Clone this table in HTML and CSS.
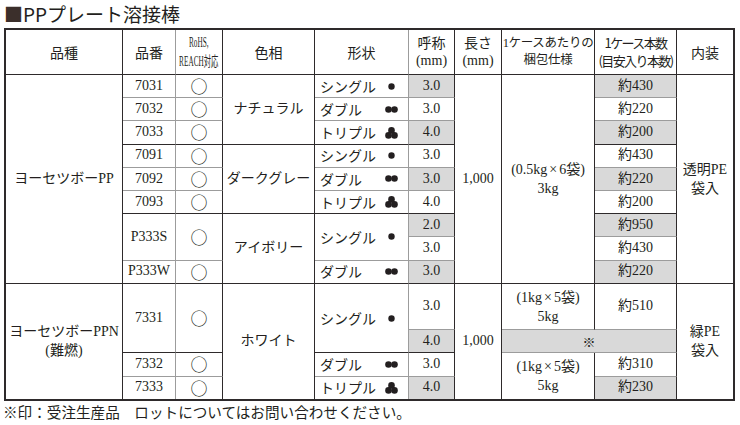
FILE: index.html
```html
<!DOCTYPE html>
<html lang="ja">
<head>
<meta charset="utf-8">
<title>PPプレート溶接棒</title>
<link rel="stylesheet" href="styles.css">
</head>
<body>
<h1 class="title"><span class="sq">■</span>PPプレート溶接棒</h1>
<div class="tbl">
  <div class="grid">
    <!-- header -->
    <div class="c h B">品種</div>
    <div class="c h B gr">品番</div>
    <div class="c h B"><span class="rohs">RoHS,<br>REACH対応</span></div>
    <div class="c h B">色相</div>
    <div class="c h B gr">形状</div>
    <div class="c h B"><span class="two">呼称<br>(mm)</span></div>
    <div class="c h B"><span class="two">長さ<br>(mm)</span></div>
    <div class="c h B"><span class="two pack">1ケースあたりの<br>梱包仕様</span></div>
    <div class="c h B"><span class="cond">1ケース本数<br>(目安入り本数)</span></div>
    <div class="c h B">内装</div>

    <!-- r1 -->
    <div class="c s9 B">ヨーセツボーPP</div>
    <div class="c gr">7031</div>
    <div class="c o">○</div>
    <div class="c s3 B">ナチュラル</div>
    <div class="c gr sh"><span>シングル</span><i class="ic"><svg width="7" height="7" viewBox="0 0 7 7"><circle cx="3.5" cy="3.5" r="3.2"/></svg></i></div>
    <div class="c f">3.0</div>
    <div class="c s9 B">1,000</div>
    <div class="c s9 B"><span class="two">(0.5kg<span class="x">×</span>6袋)<br>3kg</span></div>
    <div class="c f">約430</div>
    <div class="c s9 B"><span class="two">透明PE<br>袋入</span></div>
    <!-- r2 -->
    <div class="c gr">7032</div>
    <div class="c o">○</div>
    <div class="c gr sh"><span>ダブル</span><i class="ic"><svg width="13" height="7" viewBox="0 0 13 7"><circle cx="3.5" cy="3.5" r="3.3"/><circle cx="9.5" cy="3.5" r="3.3"/></svg></i></div>
    <div class="c">3.0</div>
    <div class="c">約220</div>
    <!-- r3 -->
    <div class="c gr B">7033</div>
    <div class="c o B">○</div>
    <div class="c gr sh B"><span>トリプル</span><i class="ic"><svg width="13" height="12" viewBox="0 0 13 12"><circle cx="6.5" cy="3.4" r="3.3"/><circle cx="3.5" cy="8.4" r="3.3"/><circle cx="9.5" cy="8.4" r="3.3"/></svg></i></div>
    <div class="c f B">4.0</div>
    <div class="c f B">約200</div>
    <!-- r4 -->
    <div class="c gr">7091</div>
    <div class="c o">○</div>
    <div class="c s3 B">ダークグレー</div>
    <div class="c gr sh"><span>シングル</span><i class="ic"><svg width="7" height="7" viewBox="0 0 7 7"><circle cx="3.5" cy="3.5" r="3.2"/></svg></i></div>
    <div class="c">3.0</div>
    <div class="c">約430</div>
    <!-- r5 -->
    <div class="c gr">7092</div>
    <div class="c o">○</div>
    <div class="c gr sh"><span>ダブル</span><i class="ic"><svg width="13" height="7" viewBox="0 0 13 7"><circle cx="3.5" cy="3.5" r="3.3"/><circle cx="9.5" cy="3.5" r="3.3"/></svg></i></div>
    <div class="c f">3.0</div>
    <div class="c f">約220</div>
    <!-- r6 -->
    <div class="c gr B">7093</div>
    <div class="c o B">○</div>
    <div class="c gr sh B"><span>トリプル</span><i class="ic"><svg width="13" height="12" viewBox="0 0 13 12"><circle cx="6.5" cy="3.4" r="3.3"/><circle cx="3.5" cy="8.4" r="3.3"/><circle cx="9.5" cy="8.4" r="3.3"/></svg></i></div>
    <div class="c B">4.0</div>
    <div class="c B">約200</div>
    <!-- r7 -->
    <div class="c gr s2">P333S</div>
    <div class="c o s2">○</div>
    <div class="c s3 B">アイボリー</div>
    <div class="c gr sh s2"><span>シングル</span><i class="ic"><svg width="7" height="7" viewBox="0 0 7 7"><circle cx="3.5" cy="3.5" r="3.2"/></svg></i></div>
    <div class="c f">2.0</div>
    <div class="c f">約950</div>
    <!-- r8 -->
    <div class="c">3.0</div>
    <div class="c">約430</div>
    <!-- r9 -->
    <div class="c gr B">P333W</div>
    <div class="c o B">○</div>
    <div class="c gr sh B"><span>ダブル</span><i class="ic"><svg width="13" height="7" viewBox="0 0 13 7"><circle cx="3.5" cy="3.5" r="3.3"/><circle cx="9.5" cy="3.5" r="3.3"/></svg></i></div>
    <div class="c f B">3.0</div>
    <div class="c f B">約220</div>
    <!-- r10 -->
    <div class="c s5"><span class="two">ヨーセツボーPPN<br>(難燃)</span></div>
    <div class="c gr s3 B">7331</div>
    <div class="c o s3 B">○</div>
    <div class="c s5">ホワイト</div>
    <div class="c gr sh s3 B"><span>シングル</span><i class="ic"><svg width="7" height="7" viewBox="0 0 7 7"><circle cx="3.5" cy="3.5" r="3.2"/></svg></i></div>
    <div class="c s2">3.0</div>
    <div class="c s5">1,000</div>
    <div class="c s2"><span class="two">(1kg<span class="x">×</span>5袋)<br>5kg</span></div>
    <div class="c s2">約510</div>
    <div class="c s5"><span class="two">緑PE<br>袋入</span></div>
    <!-- r12 -->
    <div class="c f B">4.0</div>
    <div class="c f w2 kome">※</div>
    <!-- r13 -->
    <div class="c gr">7332</div>
    <div class="c o">○</div>
    <div class="c gr sh"><span>ダブル</span><i class="ic"><svg width="13" height="7" viewBox="0 0 13 7"><circle cx="3.5" cy="3.5" r="3.3"/><circle cx="9.5" cy="3.5" r="3.3"/></svg></i></div>
    <div class="c">3.0</div>
    <div class="c s2"><span class="two">(1kg<span class="x">×</span>5袋)<br>5kg</span></div>
    <div class="c">約310</div>
    <!-- r14 -->
    <div class="c gr">7333</div>
    <div class="c o">○</div>
    <div class="c gr sh"><span>トリプル</span><i class="ic"><svg width="13" height="12" viewBox="0 0 13 12"><circle cx="6.5" cy="3.4" r="3.3"/><circle cx="3.5" cy="8.4" r="3.3"/><circle cx="9.5" cy="8.4" r="3.3"/></svg></i></div>
    <div class="c f">4.0</div>
    <div class="c f">約230</div>
  </div>
</div>
<p class="note">※印：受注生産品　ロットについてはお問い合わせください。</p>
</body>
</html>
```

FILE: styles.css
```css
:root {
  --ink: #231f20;
  --dark: #2e2a2b;
  --gray: #9c9c9c;
  --fill: #d9d9d9;
}

* { box-sizing: border-box; }

body {
  margin: 0;
  background: #fff;
  color: var(--ink);
  font-family: "Liberation Serif", "Noto Sans CJK JP", serif;
  font-size: 14px;
}

.title {
  margin: 0;
  height: 28px;
  padding: 0 0 0 4px;
  font-family: "Noto Sans CJK JP", sans-serif;
  font-size: 19px;
  font-weight: 400;
  line-height: 27px;
  color: var(--ink);
}

.sq {
  color: #3b2f2b;
}

.tbl {
  margin-left: 4px;
  width: 731px;
  border: 2px solid var(--dark);
  overflow: hidden;
}

.grid {
  display: grid;
  grid-template-columns: 117px 53px 47px 92px 94px 46px 47px 93px 82px 57px;
  grid-template-rows: 45px repeat(14, 23.214px);
  margin: 0 -1px -1px 0;
}

.c {
  display: flex;
  align-items: center;
  justify-content: center;
  text-align: center;
  white-space: nowrap;
  border-right: 1px solid var(--dark);
  border-bottom: 1px solid var(--gray);
  line-height: 1.2;
}

.gr { border-right-color: var(--gray); }
.B { border-bottom-color: var(--dark); }
.f { background: var(--fill); }

.s2 { grid-row: span 2; }
.s3 { grid-row: span 3; }
.s5 { grid-row: span 5; }
.s9 { grid-row: span 9; }
.w2 { grid-column: span 2; }

.h {
  font-family: "Noto Sans CJK JP", sans-serif;
  font-size: 14px;
}

.two {
  display: block;
  line-height: 19px;
}

.h .two {
  font-family: "Liberation Serif", "Noto Sans CJK JP", serif;
  line-height: 17px;
}

.pack {
  font-size: 12.5px;
  letter-spacing: -0.3px;
}

.rohs {
  display: inline-block;
  font-family: "Liberation Serif", "Noto Sans CJK JP", serif;
  font-size: 14px;
  line-height: 19px;
  transform: scaleX(0.52);
}

.cond {
  display: block;
  font-size: 13px;
  line-height: 18px;
  letter-spacing: -1.6px;
}

.o {
  font-family: "Noto Sans CJK JP", sans-serif;
  font-size: 17px;
}

.kome {
  font-family: "Noto Sans CJK JP", sans-serif;
  font-size: 13px;
}

.x {
  margin: 0 2px;
}

.sh {
  justify-content: space-between;
  padding: 0 10px 0 5px;
  font-family: "Noto Sans CJK JP", sans-serif;
  font-size: 14px;
}

.ic {
  display: flex;
  width: 14px;
  justify-content: center;
  align-items: center;
}

.ic svg {
  display: block;
  fill: var(--ink);
}

.note {
  margin: 0;
  padding-left: 3px;
  height: 22px;
  line-height: 22px;
  font-family: "Noto Sans CJK JP", sans-serif;
  font-size: 14.6px;
  color: var(--ink);
}
```
